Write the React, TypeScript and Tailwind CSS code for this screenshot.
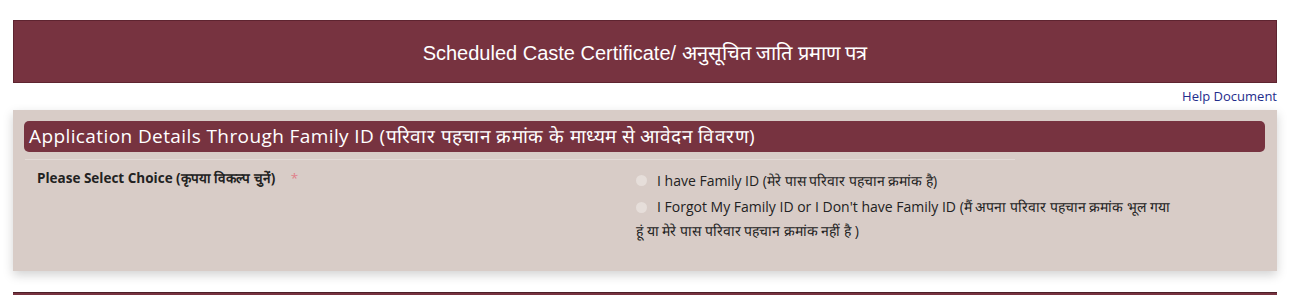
export default function App() {
  return (
    <div className="min-h-[295px] bg-white pt-5 font-['Open_Sans',sans-serif]">
      <div className="ml-[13px] w-[1264px]">
        <div className="flex h-[63px] items-center justify-center border border-[#5e2430] bg-[#773340] pt-[3px] font-['Liberation_Sans',Arial,sans-serif] text-[20px] text-white">
          Scheduled Caste Certificate/ अनुसूचित जाति प्रमाण पत्र
        </div>

        <div className="flex h-[27px] items-center justify-end text-[13px] text-[#1f2d8c]">
          <a href="#help">Help Document</a>
        </div>

        <div className="h-[161px] bg-[#d8ccc7] px-[11px] pt-[11px] shadow-[0_4px_10px_rgba(0,0,0,0.18)]">
          <div className="flex h-[31px] w-[1241px] items-center rounded-[5px] bg-[#773340] px-[5px] text-[19px] tracking-[0.4px] text-white">
            Application Details Through Family ID (परिवार पहचान क्रमांक के माध्यम से आवेदन विवरण)
          </div>
          <div className="ml-[1px] mt-[7px] h-px w-[990px] bg-[#e3dad6]" />

          <div className="mt-[8px] flex text-[#222]">
            <div className="w-[612px] pl-[13px] text-[13.5px] font-bold">
              Please Select Choice (कृपया विकल्प चुनें) <span className="ml-[12px] font-normal text-[#e0808a]">*</span>
            </div>
            <div className="w-[540px] text-[14px]">
              <label className="flex h-[24px] items-center whitespace-nowrap">
                <span className="mr-[10px] inline-block h-[11px] w-[11px] rounded-full bg-[#e6deda]" />
                I have Family ID (मेरे पास परिवार पहचान क्रमांक है)
              </label>
              <div className="mt-[3px] leading-[24px]">
                <span className="mr-[10px] inline-block h-[11px] w-[11px] rounded-full bg-[#e6deda] align-[-1px]" />
                I Forgot My Family ID or I Don't have Family ID (मैं अपना परिवार पहचान क्रमांक भूल गया हूं या मेरे पास परिवार पहचान क्रमांक नहीं है )
              </div>
            </div>
          </div>
        </div>

        <div className="mt-[21px] h-[4px] border-t border-[#4d1f28] bg-[#773340]" />
      </div>
    </div>
  );
}
